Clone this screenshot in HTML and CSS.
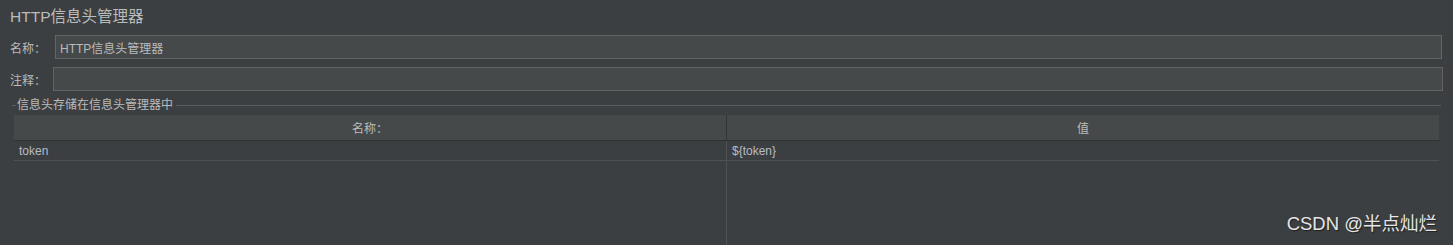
FILE: index.html
```html
<!DOCTYPE html>
<html>
<head>
    <title>HTTP信息头管理器</title>
    <link rel="stylesheet" href="styles.css">
</head>
<body>

    <h2 class="title">HTTP信息头管理器</h2>

    <div class="field-row name-row">
        <label for="name">名称：</label>
        <input type="text" id="name" value="HTTP信息头管理器">
    </div>

    <div class="field-row comment-row">
        <label for="comment">注释：</label>
        <input type="text" id="comment">
    </div>

    <div class="group">
        <div class="group-title"><span>信息头存储在信息头管理器中</span></div>
        <table class="headers">
            <thead>
                <tr>
                    <th>名称：</th>
                    <th>值</th>
                </tr>
            </thead>
            <tbody>
                <tr class="data-row">
                    <td>token</td>
                    <td>${token}</td>
                </tr>
                <tr class="filler">
                    <td></td>
                    <td></td>
                </tr>
            </tbody>
        </table>
    </div>

    <div class="watermark">CSDN @半点灿烂</div>

</body>
</html>
```

FILE: styles.css
```css
html, body {
    margin: 0;
    height: 100%;
}

body {
    background-color: #3c3f41;
    color: #bbbbbb;
    font-family: "Liberation Sans", "Noto Sans CJK SC", sans-serif;
    font-size: 12px;
    position: relative;
    overflow: hidden;
}

.title {
    margin: 0;
    padding: 6px 10px 0;
    font-size: 15.5px;
    font-weight: normal;
    line-height: 22px;
    color: #bbbbbb;
}

.field-row {
    display: flex;
    align-items: center;
    padding-left: 10px;
}

.field-row label {
    white-space: nowrap;
}

.field-row input {
    flex: 1;
    height: 24px;
    box-sizing: border-box;
    padding: 0 4px;
    background-color: #45494a;
    border: 1px solid #646464;
    color: #bbbbbb;
    font-family: inherit;
    font-size: 12px;
    outline: none;
}

.name-row {
    margin-top: 7px;
    margin-right: 11px;
}

.name-row label {
    width: 45px;
}

.comment-row {
    margin-top: 8px;
    margin-right: 10px;
}

.comment-row label {
    width: 43px;
}

.group {
    margin: 7px 12px 0;
}

.group-title {
    display: flex;
    align-items: center;
    height: 14px;
    line-height: 14px;
}

.group-title::before,
.group-title::after {
    content: "";
    height: 1px;
    background-color: #5a5d5f;
}

.group-title::before {
    width: 4px;
    margin-right: 1px;
}

.group-title::after {
    flex: 1;
    margin-left: 3px;
}

.headers {
    width: calc(100% - 4px);
    margin: 3px 2px 0;
    border-collapse: collapse;
    table-layout: fixed;
}

.headers th {
    height: 25px;
    padding: 0;
    background-color: #45494a;
    border-bottom: 1px solid #303234;
    font-weight: normal;
    text-align: center;
}

.headers th:first-child {
    border-right: 1px solid #323436;
}

.headers td {
    padding: 0 5px;
    color: #b4bcc4;
}

.headers td:first-child {
    border-right: 1px solid #505355;
}

.data-row td {
    height: 19px;
    border-bottom: 1px solid #4e5153;
}

.filler td {
    height: 84px;
}

.watermark {
    position: absolute;
    right: 16px;
    top: 209px;
    font-size: 18.5px;
    color: #e6e6e6;
    text-shadow: 1px 1px 1px #1f1f1f;
    font-family: "Liberation Sans", "Noto Sans CJK SC", sans-serif;
}
```
